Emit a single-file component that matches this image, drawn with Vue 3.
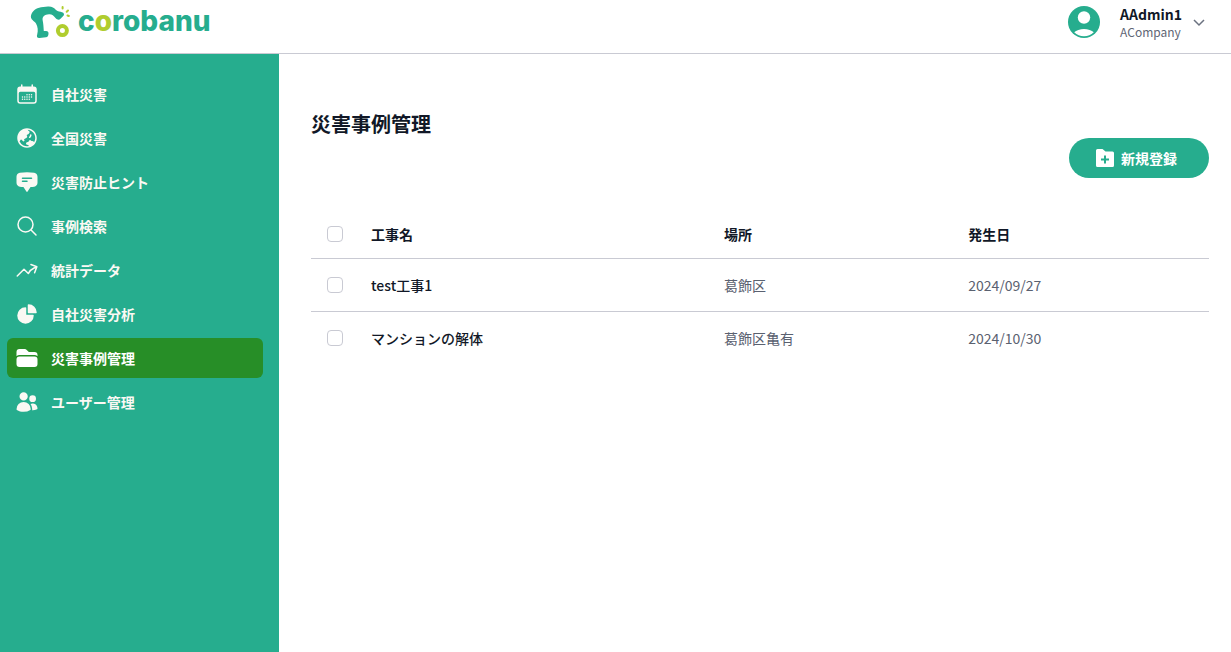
<script setup>
import { ref } from 'vue'

const navItems = [
  { label: '自社災害', icon: 'calendar' },
  { label: '全国災害', icon: 'globe' },
  { label: '災害防止ヒント', icon: 'chat' },
  { label: '事例検索', icon: 'search' },
  { label: '統計データ', icon: 'trend' },
  { label: '自社災害分析', icon: 'pie' },
  { label: '災害事例管理', icon: 'folder', active: true },
  { label: 'ユーザー管理', icon: 'users' },
]

const solid = {
  calendar:
    'M6.75 2.25A.75.75 0 0 1 7.5 3v1.5h9V3A.75.75 0 0 1 18 3v1.5h.75a3 3 0 0 1 3 3v11.25a3 3 0 0 1-3 3H5.25a3 3 0 0 1-3-3V7.5a3 3 0 0 1 3-3H6V3a.75.75 0 0 1 .75-.75Zm13.5 9a1.5 1.5 0 0 0-1.5-1.5H5.25a1.5 1.5 0 0 0-1.5 1.5v7.5a1.5 1.5 0 0 0 1.5 1.5h13.5a1.5 1.5 0 0 0 1.5-1.5v-7.5Z',
  globe:
    'M15.75 8.25a.75.75 0 0 1 .75.75c0 1.12-.492 2.126-1.27 2.812a.75.75 0 1 1-.992-1.124A2.243 2.243 0 0 0 15 9a.75.75 0 0 1 .75-.75ZM12 2.25c-5.385 0-9.75 4.365-9.75 9.75s4.365 9.75 9.75 9.75 9.75-4.365 9.75-9.75S17.385 2.25 12 2.25ZM4.575 15.6a8.25 8.25 0 0 0 9.348 4.425 1.966 1.966 0 0 0-1.84-1.275.983.983 0 0 1-.97-.822l-.073-.437c-.094-.565.25-1.11.8-1.267l.99-.282c.427-.123.783-.418.982-.816l.036-.073a1.453 1.453 0 0 1 2.328-.377L16.5 15h.628a2.25 2.25 0 0 1 1.983 1.186 8.25 8.25 0 0 0-6.345-12.4c.044.262.18.503.389.676l1.068.89c.442.369.535 1.01.216 1.49l-.51.766a2.25 2.25 0 0 1-1.161.886l-.143.048a1.107 1.107 0 0 0-.57 1.664c.369.555.169 1.307-.427 1.605L9 13.125l.423 1.059a.956.956 0 0 1-1.652.928l-.679-.906a1.125 1.125 0 0 0-1.906.172L4.575 15.6Z',
  chat:
    'M4.848 2.771A49.144 49.144 0 0 1 12 2.25c2.43 0 4.817.178 7.152.52 1.978.292 3.348 2.024 3.348 3.97v6.02c0 1.946-1.37 3.678-3.348 3.97a48.901 48.901 0 0 1-3.476.383.39.39 0 0 0-.297.17l-2.755 4.133a.75.75 0 0 1-1.248 0l-2.755-4.133a.39.39 0 0 0-.297-.17 48.9 48.9 0 0 1-3.476-.384c-1.978-.29-3.348-2.024-3.348-3.97V6.741c0-1.946 1.37-3.68 3.348-3.97ZM6.75 8.25a.75.75 0 0 1 .75-.75h9a.75.75 0 0 1 0 1.5h-9a.75.75 0 0 1-.75-.75Zm.75 2.25a.75.75 0 0 0 0 1.5H12a.75.75 0 0 0 0-1.5H7.5Z',
  pie:
    'M2.25 13.5a8.25 8.25 0 0 1 8.25-8.25.75.75 0 0 1 .75.75v6.75H18a.75.75 0 0 1 .75.75 8.25 8.25 0 0 1-16.5 0ZM12.75 3a.75.75 0 0 1 .75-.75 8.25 8.25 0 0 1 8.25 8.25.75.75 0 0 1-.75.75h-7.5a.75.75 0 0 1-.75-.75V3Z',
  folder:
    'M19.5 21a3 3 0 0 0 3-3v-4.5a3 3 0 0 0-3-3h-15a3 3 0 0 0-3 3V18a3 3 0 0 0 3 3h15ZM1.5 10.146V6a3 3 0 0 1 3-3h5.379a2.25 2.25 0 0 1 1.59.659l2.122 2.121c.14.141.331.22.53.22H19.5a3 3 0 0 1 3 3v1.146A4.483 4.483 0 0 0 19.5 9h-15a4.483 4.483 0 0 0-3 1.146Z',
  users:
    'M4.5 6.375a4.125 4.125 0 1 1 8.25 0 4.125 4.125 0 0 1-8.25 0ZM14.25 8.625a3.375 3.375 0 1 1 6.75 0 3.375 3.375 0 0 1-6.75 0ZM1.5 19.125a7.125 7.125 0 0 1 14.25 0v.003l-.001.119a.75.75 0 0 1-.363.63 13.067 13.067 0 0 1-6.761 1.873c-2.472 0-4.786-.684-6.76-1.873a.75.75 0 0 1-.364-.63l-.001-.122ZM17.25 19.128l-.001.144a2.25 2.25 0 0 1-.233.96 10.088 10.088 0 0 0 5.06-1.01.75.75 0 0 0 .42-.643 4.875 4.875 0 0 0-6.957-4.611 8.586 8.586 0 0 1 1.71 5.157v.003Z',
}

const outline = {
  search: 'm21 21-5.197-5.197m0 0A7.5 7.5 0 1 0 5.196 5.196a7.5 7.5 0 0 0 10.607 10.607Z',
  trend:
    'M2.25 18 9 11.25l4.306 4.306a11.95 11.95 0 0 1 5.814-5.518l2.74-1.22m0 0-5.94-2.281m5.94 2.28-2.28 5.941',
}

const calendarDots = [
  [12, 12.75], [14.25, 12.75], [16.5, 12.75],
  [7.5, 15], [9.75, 15], [12, 15], [14.25, 15], [16.5, 15],
  [7.5, 17.25], [9.75, 17.25], [12, 17.25], [14.25, 17.25],
]

const rows = ref([
  { id: 1, name: 'test工事1', place: '葛飾区', date: '2024/09/27', checked: false },
  { id: 2, name: 'マンションの解体', place: '葛飾区亀有', date: '2024/10/30', checked: false },
])

function toggleAll(event) {
  rows.value.forEach((row) => (row.checked = event.target.checked))
}
</script>

<template>
  <div class="app">
    <header class="header">
      <a class="logo" href="#" aria-label="corobanu">
        <svg class="logo-mark" viewBox="0 0 42 36" aria-hidden="true">
          <path
            class="logo-green"
            d="M1 11.500C2 7 6 4 11 3.200L18 2.600C22 2.400 24 4 26 6C28 7.600 30 7.700 32 8.200C34 8.700 34.500 10.200 33.500 11.700L30.500 14.800C29 16.300 27 15.600 25.500 14C23.500 11.500 22 10 19 10.200C14.500 10.500 12.200 12.500 12.600 16C13.400 20 13.600 23 13.800 27H16C18 27 18.500 28 18.500 29.500C18.500 32 17.500 33 16 33.200L9.500 34C7 34.200 6.500 32.500 7.200 30.500C8.300 26 7.800 23 6 19.500C4.500 17 0 15.500 1 11.500Z"
          />
          <circle class="logo-ring" cx="32.400" cy="26.600" r="4.500" />
          <path class="logo-rays" d="M32.600 3v1.500M38 6.500l-1.300 1.300M37.500 11.500l1.400.5" />
        </svg>
        <span class="logo-text">c<span class="logo-accent">o</span>robanu</span>
      </a>
      <button class="account" type="button" aria-haspopup="menu">
        <svg class="avatar" viewBox="0 0 32 32" aria-hidden="true">
          <circle class="avatar-bg" cx="16" cy="16" r="16" />
          <circle class="avatar-fg" cx="16" cy="11.500" r="6.200" />
          <path class="avatar-fg" d="M6.200 26.200a11.500 6.500 0 0 1 19.600 0a14 14 0 0 1-19.600 0Z" />
        </svg>
        <span class="account-text">
          <span class="account-name">AAdmin1</span>
          <span class="account-company">ACompany</span>
        </span>
        <svg class="chevron" viewBox="0 0 20 20" aria-hidden="true"><path d="m5 8 5 5 5-5" /></svg>
      </button>
    </header>

    <div class="body">
      <nav class="sidebar">
        <a
          v-for="item in navItems"
          :key="item.label"
          class="nav-item"
          :class="{ active: item.active }"
          :aria-current="item.active ? 'page' : undefined"
          href="#"
        >
          <svg class="nav-icon" viewBox="0 0 24 24" aria-hidden="true">
            <path v-if="solid[item.icon]" class="solid" :d="solid[item.icon]" />
            <path v-else class="outline" :d="outline[item.icon]" />
            <template v-if="item.icon === 'calendar'">
              <circle v-for="[x, y] in calendarDots" :key="`${x}-${y}`" class="solid" :cx="x" :cy="y" r="0.75" />
            </template>
          </svg>
          <span class="label">{{ item.label }}</span>
        </a>
      </nav>

      <main class="main">
        <h1 class="title">災害事例管理</h1>
        <div class="toolbar">
          <button class="create" type="button">
            <svg class="create-icon" viewBox="0 0 18 18" aria-hidden="true">
              <path
                class="solid"
                d="M1.500 0H6.500L9.500 2.500H16.500A1.500 1.500 0 0 1 18 4V16.500A1.500 1.500 0 0 1 16.500 18H1.500A1.500 1.500 0 0 1 0 16.500V1.500A1.500 1.500 0 0 1 1.500 0ZM8 6.500V9.500H5V11.500H8V14.500H10V11.500H13V9.500H10V6.500Z"
              />
            </svg>
            <span class="label">新規登録</span>
          </button>
        </div>
        <table class="table">
          <thead>
            <tr>
              <th class="col-check"><input type="checkbox" aria-label="すべて選択" @change="toggleAll" /></th>
              <th class="col-name" scope="col">工事名</th>
              <th class="col-place" scope="col">場所</th>
              <th scope="col">発生日</th>
            </tr>
          </thead>
          <tbody>
            <tr v-for="row in rows" :key="row.id">
              <td><input v-model="row.checked" type="checkbox" :aria-label="row.name" /></td>
              <td class="name">{{ row.name }}</td>
              <td>{{ row.place }}</td>
              <td>{{ row.date }}</td>
            </tr>
          </tbody>
        </table>
      </main>
    </div>
  </div>
</template>

<style>
body {
  margin: 0;
  background: #fff;
}
</style>

<style scoped>
.app {
  display: flex;
  flex-direction: column;
  min-height: 100vh;
  color: #111827;
  font-family: "Noto Sans CJK JP", sans-serif;
  font-size: 14px;
  line-height: 20px;
}
.app * {
  box-sizing: border-box;
}
button {
  border: 0;
  padding: 0;
  font: inherit;
  color: inherit;
  cursor: pointer;
}
.header {
  display: flex;
  align-items: center;
  justify-content: space-between;
  height: 54px;
  padding: 0 22px 9px 30px;
  border-bottom: 1px solid #c9cad3;
}
.logo {
  display: flex;
  align-items: center;
  gap: 6px;
  text-decoration: none;
}
.logo-mark {
  width: 42px;
  height: 36px;
}
.logo-green {
  fill: #26ad8e;
}
.logo-ring {
  fill: none;
  stroke: #b0cd2e;
  stroke-width: 4;
}
.logo-rays {
  fill: none;
  stroke: #b0cd2e;
  stroke-width: 2;
  stroke-linecap: round;
}
.logo-text {
  padding-bottom: 2px;
  color: #26ad8e;
  font-family: Inter, sans-serif;
  font-size: 28px;
  font-weight: 800;
  line-height: 32px;
}
.logo-accent {
  color: #b0cd2e;
}
.account {
  display: flex;
  align-items: center;
  background: none;
  text-align: left;
}
.avatar {
  width: 32px;
  height: 32px;
  margin-right: 20px;
}
.avatar-bg {
  fill: #26ad8e;
}
.avatar-fg {
  fill: #fff;
}
.account-text {
  display: flex;
  flex-direction: column;
}
.account-name {
  font-weight: 700;
  line-height: 20px;
}
.account-company {
  color: #5f6675;
  font-size: 12px;
  line-height: 16px;
}
.chevron {
  width: 20px;
  height: 20px;
  margin-left: 7px;
  fill: none;
  stroke: #6b7280;
  stroke-width: 1.5;
}
.body {
  display: flex;
  flex: 1;
}
.sidebar {
  display: flex;
  flex: 0 0 279px;
  flex-direction: column;
  gap: 4px;
  padding: 20px 16px 20px 7px;
  background: #26ad8e;
}
.nav-item {
  display: flex;
  align-items: center;
  gap: 12px;
  height: 40px;
  padding: 0 8px;
  border-radius: 6px;
  color: #fbf9f4;
  font-weight: 700;
  text-decoration: none;
}
.nav-item.active {
  background: #278e27;
  color: #fff;
}
.label {
  padding-bottom: 1px;
}
.nav-icon {
  width: 24px;
  height: 24px;
}
.solid {
  fill: currentColor;
  fill-rule: evenodd;
}
.outline {
  fill: none;
  stroke: currentColor;
  stroke-width: 1.5;
  stroke-linecap: round;
  stroke-linejoin: round;
}
.main {
  flex: 1;
  min-width: 0;
  padding: 56px 22px 32px 32px;
}
.title {
  margin: 0;
  font-size: 20px;
  font-weight: 700;
  line-height: 28px;
}
.toolbar {
  display: flex;
  justify-content: flex-end;
  margin-bottom: 32px;
}
.create {
  display: flex;
  align-items: center;
  justify-content: center;
  gap: 7px;
  width: 140px;
  height: 40px;
  padding-right: 5px;
  border-radius: 20px;
  background: #26ad8e;
  color: #fff;
  font-weight: 700;
}
.create-icon {
  width: 18px;
  height: 18px;
}
.table {
  width: 100%;
  border-collapse: separate;
  border-spacing: 0;
  table-layout: fixed;
}
th,
td {
  height: 52px;
  padding: 0 16px;
  text-align: left;
  vertical-align: middle;
}
th {
  height: 49px;
  border-bottom: 1px solid #c9cad3;
  font-weight: 700;
}
td {
  color: #5a6170;
}
tr:not(:last-child) td {
  height: 53px;
  border-bottom: 1px solid #c9cad3;
}
.col-check {
  width: 44px;
}
.col-name {
  width: 39.3%;
}
.col-place {
  width: 27.2%;
}
td.name {
  color: #111827;
  font-weight: 500;
}
input[type="checkbox"] {
  display: block;
  width: 16px;
  height: 16px;
  margin: 0;
  border: 1px solid #c9cad3;
  border-radius: 4px;
  background: #fff;
  appearance: none;
}
input[type="checkbox"]:checked {
  border-color: #26ad8e;
  background: #26ad8e;
}
</style>
